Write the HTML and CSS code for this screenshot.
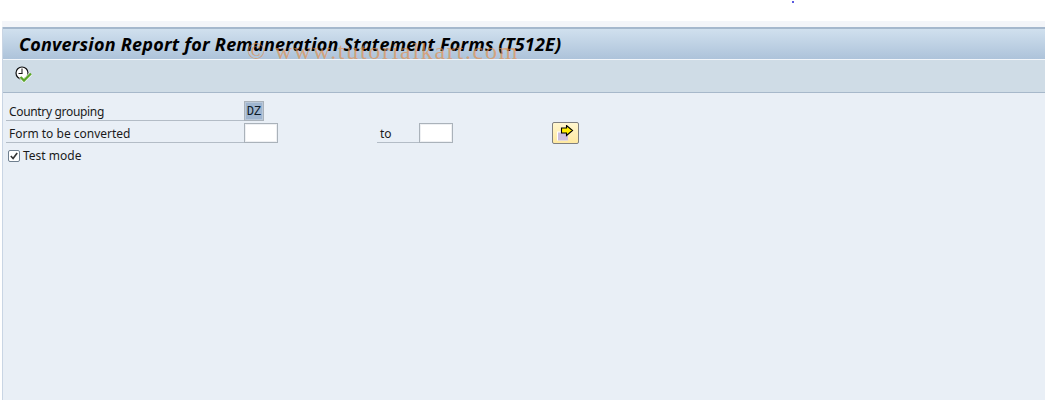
FILE: index.html
```html
<!DOCTYPE html>
<html lang="en">
<head>
<meta charset="utf-8">
<title>Conversion Report for Remuneration Statement Forms (T512E)</title>
<link rel="stylesheet" href="styles.css">
</head>
<body>
<span class="speck"></span>
<div class="top-white"></div>
<div class="top-pale"></div>
<main class="window">
  <header class="title-bar">
    <h1 class="title">Conversion Report for Remuneration Statement Forms (T512E)</h1>
  </header>
  <div class="watermark">© www.tutorialkart.com</div>
  <div class="toolbar">
    <svg class="exec-icon" width="18" height="18" viewBox="0 0 18 18">
      <circle cx="7" cy="7" r="6" fill="#fff" stroke="#111" stroke-width="1.200"/>
      <path d="M7 2.500V7.500M3.500 7.500H7.500" fill="none" stroke="#111" stroke-width="1"/>
      <path d="M5.500 11l3.500 3.500L16 7.500" fill="none" stroke="#fff" stroke-width="3.600"/>
      <path d="M5.500 11l3.500 3.500L16 7.500" fill="none" stroke="#5aa52a" stroke-width="2.400"/>
    </svg>
  </div>
  <section class="form">
    <div class="row row-country">
      <label class="label label-main label-tight">Country grouping</label>
      <span class="field field-dz">DZ</span>
    </div>
    <div class="row row-range">
      <label class="label label-main">Form to be converted</label>
      <span class="field field-blank"></span>
      <span class="range-gap"></span>
      <label class="label label-to">to</label>
      <span class="field field-blank"></span>
      <span class="button-gap"></span>
      <button class="multi-btn" type="button">
        <svg width="17" height="17" viewBox="0 0 17 17">
          <rect x="0" y="6.500" width="11" height="9" fill="#fff"/>
          <rect x="1" y="7.500" width="10" height="8" fill="#cdbfdc"/>
          <path d="M4.500 3H9.500V0.500L15.500 5.500 9.500 10.500V8H4.500Z" fill="#ffee00" stroke="#000" stroke-width="1.100"/>
        </svg>
      </button>
    </div>
    <div class="row row-check">
      <span class="checkbox">
        <svg width="10" height="10" viewBox="0 0 11 11">
          <path d="M2 5.500l2.500 2.700L9 2.200" fill="none" stroke="#333" stroke-width="1.800"/>
        </svg>
      </span>
      <label class="label label-check">Test mode</label>
    </div>
  </section>
</main>
</body>
</html>
```
FILE: styles.css
```css
* { box-sizing: border-box; }
html, body { margin: 0; padding: 0; }
body {
  width: 1045px;
  height: 400px;
  overflow: hidden;
  background: #fff;
  font-family: "Noto Sans", "Open Sans", sans-serif;
  color: #1a1a1a;
  position: relative;
}
.speck {
  position: absolute;
  left: 792px;
  top: 1px;
  width: 2px;
  height: 2px;
  background: #5a5ae0;
}
.top-white { height: 21px; background: #fff; }
.top-pale { height: 6px; background: #f3f5f9; margin-left: 2px; }
.window {
  position: relative;
  margin-left: 2px;
  height: 373px;
  background: #e9eff6;
  border-left: 1px solid #c9d5e4;
}
.title-bar {
  height: 33px;
  border-top: 2px solid #a5b8cd;
  border-bottom: 1px solid #f2f6fa;
  background: linear-gradient(#d0e0ee, #adc3da);
  display: flex;
  align-items: center;
  padding-left: 16px;
}
.title {
  margin: 0;
  font-size: 18px;
  letter-spacing: 0.22px;
  font-weight: 700;
  font-style: italic;
  color: #000;
  white-space: nowrap;
}
.watermark {
  position: absolute;
  left: 244px;
  top: 11px;
  font-family: "Liberation Serif", serif;
  font-size: 24px;
  letter-spacing: 1.700px;
  color: rgba(226, 145, 80, 0.7);
  white-space: nowrap;
  pointer-events: none;
}
.toolbar {
  height: 33px;
  background: #cfdce6;
  border-bottom: 1px solid #a7b8ca;
  display: flex;
  align-items: center;
  padding: 0 0 2px 12px;
}
.exec-icon { display: block; }
.form { padding: 8px 0 0 3px; }
.row { display: flex; align-items: flex-end; }
.row-country { height: 20px; }
.row-range { height: 22px; }
.row-check { height: 14px; margin-top: 6px; align-items: center; padding-left: 2px; }
.label {
  font-size: 12px;
  line-height: 15px;
  padding-bottom: 1px;
  white-space: nowrap;
  color: #1a1a1a;
}
.label-main {
  width: 238px;
  padding-left: 3px;
  border-bottom: 1px solid #b3bcc6;
}
.label-tight { letter-spacing: -0.33px; }
.label-to {
  width: 42px;
  padding-left: 3px;
  border-bottom: 1px solid #b3bcc6;
}
.label-check { margin-left: 3px; }
.field {
  display: block;
  border: 1px solid #aab2ba;
  box-shadow: inset 0 0 0 1px #eef0f3;
  background: #fff;
}
.field-dz {
  width: 20px;
  height: 20px;
  background: #9fb5cf;
  box-shadow: inset 0 0 0 1px #b9c8da;
  font-family: "Liberation Mono", monospace;
  font-size: 12px;
  font-weight: 400;
  line-height: 20px;
  text-align: center;
  color: #0d1a28;
}
.field-blank { width: 34px; height: 20px; }
.range-gap { width: 99px; }
.button-gap { width: 99px; }
.multi-btn {
  width: 27px;
  height: 22px;
  padding: 0;
  margin-bottom: -1px;
  border: 1px solid #7f7f7f;
  border-radius: 2px;
  background: linear-gradient(#fff6cf, #ffe9a0);
  display: flex;
  align-items: center;
  justify-content: center;
}
.checkbox {
  width: 12px;
  height: 12px;
  border: 1px solid #6f7f8f;
  border-radius: 2px;
  background: #fff;
  display: flex;
  align-items: center;
  justify-content: center;
}
```
